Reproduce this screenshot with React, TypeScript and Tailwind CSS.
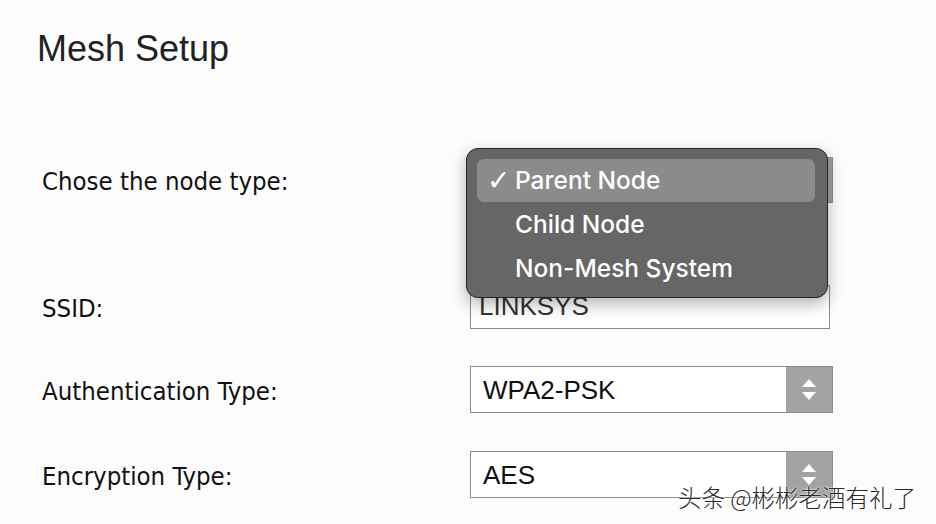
import React from "react";

const labelFont = "font-['DejaVu_Sans_Condensed','DejaVu_Sans',sans-serif]";

const Stepper = () => (
  <div className="flex h-full w-[46px] flex-col items-center justify-center gap-[5px] bg-[#a3a3a3]">
    <svg width="14" height="8" viewBox="0 0 14 8">
      <path d="M7 0 L14 8 L0 8 Z" fill="#fff" />
    </svg>
    <svg width="14" height="8" viewBox="0 0 14 8">
      <path d="M0 0 L14 0 L7 8 Z" fill="#fff" />
    </svg>
  </div>
);

const Select = ({ value }: { value?: string }) => (
  <div className="flex h-full w-[363px] items-center border border-[#8a8a8a] bg-white">
    <span className="flex-1 pl-[12px] font-['Liberation_Sans',Arial,sans-serif] text-[26px] leading-none text-[#111]">
      {value}
    </span>
    <Stepper />
  </div>
);

const menuItems = ["Parent Node", "Child Node", "Non-Mesh System"];

// open menu covers the node-type select
const NodeMenu = () => (
  <div className="absolute left-[-4px] top-[-9px] z-10 h-[150px] w-[362px] rounded-[12px] border border-[#262626] bg-[#666666] pb-[8px] pl-[10px] pr-[12px] pt-[10px] shadow-[0_6px_16px_rgba(0,0,0,0.3)]">
    {menuItems.map((item, i) => (
      <div
        key={item}
        className={`flex items-center rounded-[7px] pl-[10px] font-['Inter',sans-serif] text-[24.5px] font-medium text-white ${
          i === 0 ? "h-[43px] bg-[#8b8b8b]" : "h-[44px]"
        }`}
      >
        <span className="w-[28px] shrink-0 font-['DejaVu_Sans',sans-serif] text-[28px] font-normal">
          {i === 0 ? "✓" : ""}
        </span>
        {item}
      </div>
    ))}
  </div>
);

const Row = ({
  label,
  height,
  mt,
  children,
}: {
  label: string;
  height: string;
  mt: string;
  children: React.ReactNode;
}) => (
  <div className={`flex items-center ${height} ${mt}`}>
    <div className={`w-[470px] shrink-0 pl-[42px] pt-[3px] ${labelFont} text-[25.5px] text-[#111]`}>{label}</div>
    <div className="relative h-full">{children}</div>
  </div>
);

export default function App() {
  return (
    <div className="relative h-[524px] w-[936px] overflow-hidden bg-[#fcfcfd]">
      <h1 className="pl-[37px] pt-[31px] font-['Liberation_Sans',Arial,sans-serif] text-[36px] leading-[36px] text-[#222]">
        Mesh Setup
      </h1>

      <Row label="Chose the node type:" height="h-[46px]" mt="mt-[90px]">
        <Select />
        <NodeMenu />
      </Row>

      <Row label="SSID:" height="h-[44px]" mt="mt-[82px]">
        <div className="flex h-full w-[360px] items-end border border-[#8a8a8a] bg-white pb-[9px] pl-[8px]">
          <span className="font-['Liberation_Sans',Arial,sans-serif] text-[26px] leading-none text-[#333]">
            LINKSYS
          </span>
        </div>
      </Row>

      <Row label="Authentication Type:" height="h-[47px]" mt="mt-[37px]">
        <Select value="WPA2-PSK" />
      </Row>

      <Row label="Encryption Type:" height="h-[47px]" mt="mt-[38px]">
        <Select value="AES" />
      </Row>

      <div className="absolute left-[678px] top-[482px] z-20 font-['Noto_Sans_CJK_SC',sans-serif] text-[23.5px] font-light leading-[30px] text-[#2a2a2a] [text-shadow:0_0_2px_#fff,0_0_2px_#fff]">
        头条 @彬彬老酒有礼了
      </div>
    </div>
  );
}
